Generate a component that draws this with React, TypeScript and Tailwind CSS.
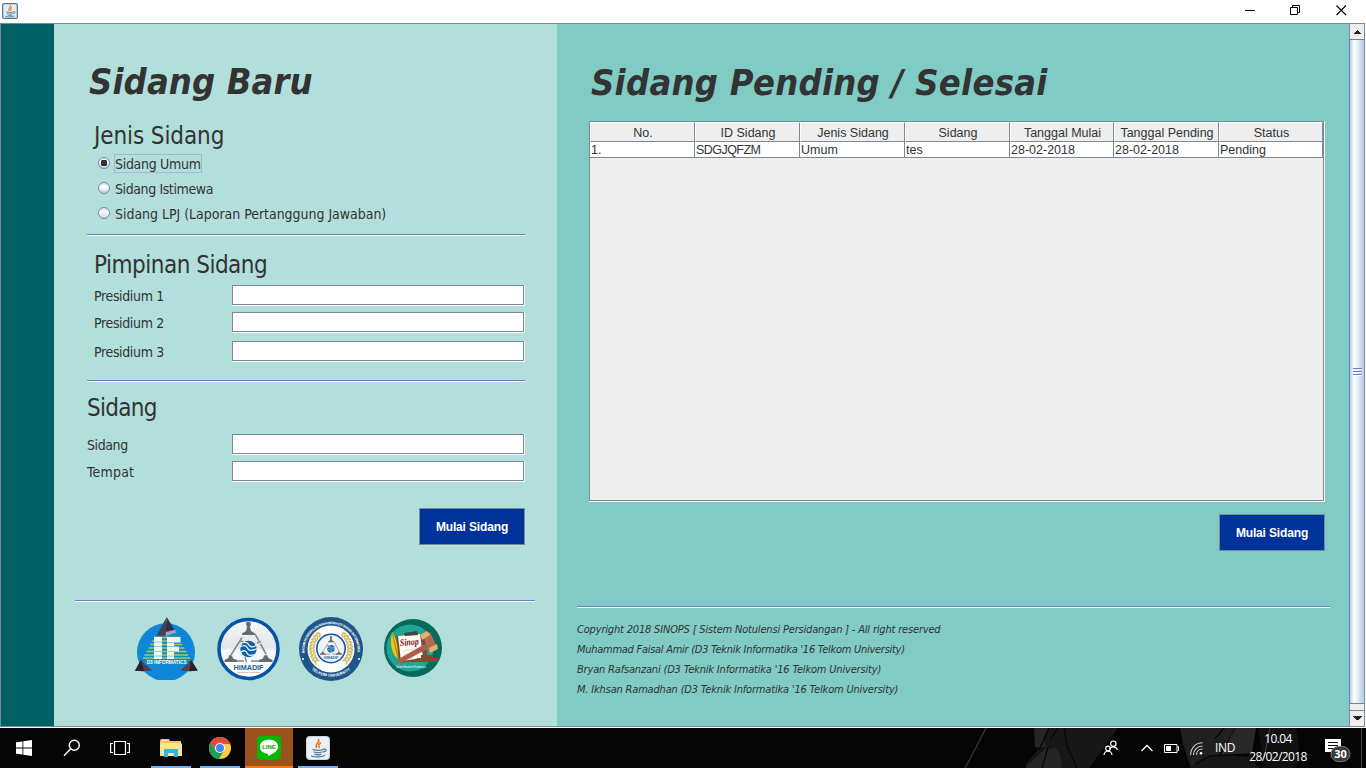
import type { ReactNode } from "react";

function Separator({ className = "" }: { className?: string }) {
  return <div className={`h-0.5 shrink-0 border-t border-[#6382bf] bg-white ${className}`} />;
}

function Radio({ label, tracking, checked = false }: { label: string; tracking: string; checked?: boolean }) {
  return (
    <div className="flex h-[25px] items-center pl-[11px]">
      <svg className="mb-0.5 block size-3 shrink-0" viewBox="0 0 12 12">
        <defs>
          <linearGradient id="radioFill" x1="0" y1="0" x2="0" y2="1">
            <stop offset="0" stopColor="#d3e0f0" />
            <stop offset="0.4" stopColor="#ffffff" />
            <stop offset="1" stopColor="#b8cfe5" />
          </linearGradient>
        </defs>
        <circle cx="6" cy="6" r="5.5" fill="url(#radioFill)" stroke="#7a8a99" />
        {checked && <path d="M4 3h4l1 1v4l-1 1H4L3 8V4z" fill="#333333" />}
      </svg>
      <span
        className={`ml-1 flex h-[19px] items-center whitespace-nowrap border pt-0.5 text-[14px] ${tracking} ${
          checked ? "border-[#a3b8cc]" : "border-transparent"
        }`}
      >
        {label}
      </span>
    </div>
  );
}

function Field({ label, tracking, className = "" }: { label: string; tracking: string; className?: string }) {
  return (
    <div className={`flex h-[21px] shrink-0 ${className}`}>
      <label className={`flex-1 text-[14px] leading-[22px] ${tracking}`}>{label}</label>
      <div className="h-[21px] w-[293px] border-r border-b border-white">
        <div className="h-5 w-[292px] border border-[#7a8a99] bg-white" />
      </div>
    </div>
  );
}

function StartButton({ className = "" }: { className?: string }) {
  return (
    <button
      className={`h-[37px] w-[106px] shrink-0 border border-[#7a8a99] bg-[#003399] font-['Liberation_Sans',sans-serif] text-[12px] font-bold tracking-[-0.15px] text-white ${className}`}
    >
      Mulai Sidang
    </button>
  );
}

function InformaticsLogo() {
  return (
    <svg className="block h-[63px] w-[64px]" viewBox="0 0 64 63">
      <circle cx="31" cy="35.300" r="29" fill="#0f87d6" />
      <path
        d="M19 20.500h25M17.500 24h28M15.500 27.500h32M13.500 31h36M11.500 34.500h40M9.500 38h43.500M8 41h47"
        stroke="#a3c95a"
        strokeWidth="1.400"
      />
      <path d="M19 20h8v22h-8zM32 20h13.500v5.500H39v4h5v5h-5V42h-7z" fill="#f1f7ea" />
      <path d="M19 25h8M19 29.500h8M19 34.500h8M19 39h8M32 25.500h7M32 29.500h7M32 34.500h7M32 39h7" stroke="#8ecbe0" strokeWidth="1" />
      <path d="M31.700 0 21.700 18.500l8.600.700z" fill="#4a3f55" />
      <path d="M31.700 0 30.300 19.200 41 15.300z" fill="#33304f" />
      <path d="m31 15 9.300-2.500.900 3.200-10.900 3.500z" fill="#a2a0c0" />
      <path d="M6 43 0 53.700l9 .600 8-.800z" fill="#53404a" />
      <path d="M6 43 0 53.700l9 .600z" fill="#2c2030" />
      <path d="m56 43-10.500 10.500 9 .800 8.200-.800z" fill="#53404a" />
      <path d="m56 43-1.500 11.300 8.200-.800z" fill="#2c2030" />
      <path d="M10.500 42h42l1 5.500h-44z" fill="#1488cf" />
      <text
        x="31.700"
        y="47"
        textAnchor="middle"
        textLength="40"
        lengthAdjust="spacingAndGlyphs"
        className="fill-white font-['Liberation_Sans',sans-serif] text-[5.500px] font-bold"
      >
        D3 INFORMATICS
      </text>
    </svg>
  );
}

function HimadifMark() {
  return (
    <g>
      <path d="M25 20.500 14 38M38 17l4 7M43.500 27 49 37M17 44h10M34 44h11" stroke="#85898d" strokeWidth="1.600" fill="none" />
      <path d="M22.500 24.500h4M40 26l4-1.500M28 40l1.500 5" stroke="#85898d" strokeWidth="1.400" fill="none" />
      <path d="M29.500 5h3.500l1 2-1 3 1 4 4 2.500v1.500H25v-1.500l4-2.500 1-4-1-3z" fill="#686b6e" />
      <path d="m12 38 3 .500 1 3 4 1.500v2H7.500v-2l4-2z" fill="#686b6e" />
      <path d="m50 38-3 .500-1 3-4 1.500v2h13.500v-2l-4-2z" fill="#686b6e" />
      <circle cx="31.500" cy="32" r="8.200" fill="#0d5fae" />
      <path
        d="M22.500 30c4-2.500 7-1.500 8 1s4 3.500 9.500.500M26 25.500c3-.500 5 .500 6 2.500s3.500 2.500 7 .500M24 35c3-2 5-1.500 6 1s3.500 3 7.500 1.500"
        stroke="#e8f1f8"
        strokeWidth="1.300"
        fill="none"
      />
    </g>
  );
}

function HimadifLogo() {
  return (
    <svg className="block h-[64px] w-[64px]" viewBox="0 0 64 64">
      <defs>
        <linearGradient id="himadifFill" x1="0" y1="0" x2="0" y2="1">
          <stop offset="0" stopColor="#f8f9fa" />
          <stop offset="0.480" stopColor="#e2e4e6" />
          <stop offset="0.520" stopColor="#f5f6f7" />
          <stop offset="1" stopColor="#ffffff" />
        </linearGradient>
      </defs>
      <circle cx="31.500" cy="32" r="29.500" fill="url(#himadifFill)" stroke="#0753a5" strokeWidth="3.500" />
      <HimadifMark />
      <text
        x="31.500"
        y="52.500"
        textAnchor="middle"
        textLength="30"
        lengthAdjust="spacingAndGlyphs"
        className="fill-[#1764a9] font-['Liberation_Sans',sans-serif] text-[8px] font-bold"
      >
        HIMADIF
      </text>
      <text x="31.500" y="56" textAnchor="middle" textLength="23" className="fill-[#c46b60] font-['Liberation_Sans',sans-serif] text-[2.500px]">
        UNIVERSITAS TELKOM
      </text>
    </svg>
  );
}

const LEAVES = [-50, -40, -30, -20, -10, 0, 10, 20, 30, 40];

function SenateLogo() {
  return (
    <svg className="block h-[64px] w-[66px]" viewBox="0 0 66 64">
      <defs>
        <path id="senateTop" d="M6.500 36a26.600 26.600 0 1 1 53 0" />
        <path id="senateBottom" d="M10 49a30 30 0 0 0 46 0" />
      </defs>
      <circle cx="33" cy="32" r="32" fill="#1f5688" />
      <circle cx="33" cy="32" r="23.500" fill="#ffffff" />
      {LEAVES.map((angle) => (
        <g key={angle} fill="#d4bc68">
          <g transform={`rotate(${-angle} 33 32)`}>
            <ellipse cx="12.500" cy="32" rx="1.100" ry="2.500" transform="rotate(35 12.500 32)" />
            <ellipse cx="15.500" cy="32" rx="1" ry="2.200" transform="rotate(-35 15.500 32)" />
          </g>
          <g transform={`rotate(${angle} 33 32)`}>
            <ellipse cx="53.500" cy="32" rx="1.100" ry="2.500" transform="rotate(-35 53.500 32)" />
            <ellipse cx="50.500" cy="32" rx="1" ry="2.200" transform="rotate(35 50.500 32)" />
          </g>
        </g>
      ))}
      <circle cx="33" cy="31.500" r="14.200" fill="#f1f3f5" stroke="#0d57a5" strokeWidth="1.600" />
      <g transform="translate(18.500 17) scale(0.460)">
        <HimadifMark />
      </g>
      <text
        x="33"
        y="42"
        textAnchor="middle"
        textLength="14"
        lengthAdjust="spacingAndGlyphs"
        className="fill-[#1764a9] font-['Liberation_Sans',sans-serif] text-[4px] font-bold"
      >
        HIMADIF
      </text>
      <text className="fill-white font-['Liberation_Sans',sans-serif] text-[3.400px] font-bold tracking-[-0.300px]">
        <textPath href="#senateTop">BADAN PERWAKILAN MAHASISWA D3 TEKNIK INFORMATIKA</textPath>
      </text>
      <text textAnchor="middle" className="fill-white font-['Liberation_Sans',sans-serif] text-[4px] font-bold">
        <textPath href="#senateBottom" startOffset="50%">
          TELKOM UNIVERSITY
        </textPath>
      </text>
      <circle cx="5" cy="42" r="1" fill="#fff" />
      <circle cx="61" cy="42" r="1" fill="#fff" />
    </svg>
  );
}

function SinopsLogo() {
  return (
    <svg className="block h-[60px] w-[60px]" viewBox="0 0 60 60">
      <circle cx="30" cy="30" r="29" fill="#07685c" />
      <circle cx="27" cy="30" r="23.500" fill="#1fa596" />
      <path d="m13 18 22-3 7 4 3 22-29 4z" fill="#7f4c35" />
      <path d="m15 18 22-2 3 24-22 3z" fill="#fffaf2" />
      <path d="m21 15 13-2 1 4-13 1z" fill="#3b4a43" />
      <path d="m20 33 13-2M21 37l10-1M22 41l8-1" stroke="#d4cfc8" strokeWidth="0.800" />
      <path d="M9 14c4 6 6 13 6 27l-3-3c-4-6-5-14-3-24z" fill="#f3c512" />
      <path d="m9.500 16 7.500 32" stroke="#b77f08" strokeWidth="1" />
      <path d="m42 26 4 4-29 15.500-2.500-4z" fill="#a8604a" />
      <path d="m39 17 8-3 7 15-7 5z" fill="#b76a50" />
      <path d="m37 17 7-4 3 4-8 5zM46 30l8-4 1 5-8 4z" fill="#e6b267" />
      <path d="M38 37h12v3H38zM35 40h20v4H26z" fill="#8e4434" />
      <text
        x="17"
        y="28"
        textLength="19"
        lengthAdjust="spacingAndGlyphs"
        transform="rotate(-4 17 28)"
        className="fill-[#7b2028] font-['Liberation_Serif',serif] text-[10px] font-bold italic"
      >
        Sinop
      </text>
      <text
        x="28"
        y="50"
        textAnchor="middle"
        textLength="30"
        lengthAdjust="spacingAndGlyphs"
        className="fill-white font-['Liberation_Sans',sans-serif] text-[3px]"
      >
        Sistem Notulensi Persidangan
      </text>
    </svg>
  );
}

function JavaGlyph() {
  return (
    <g fill="none" strokeLinecap="round">
      <path d="M12.500 3.500c2 3-4 4-2 8M14.500 7c-3 1.500-1 3 -1.500 4.500" stroke="#ea7a22" strokeWidth="1.600" />
      <path
        d="M7 13.500c3 1 7 1 10 0M8 16c3 .9 5 .9 8 0M9 18.300c2 .6 4 .6 6 0M18 13c3-.5 2.500 2.500-.5 3M5.500 20c3 1.300 10 1.300 13-.5"
        stroke="#4f7f9f"
        strokeWidth="1.300"
      />
    </g>
  );
}

const COLUMNS = ["No.", "ID Sidang", "Jenis Sidang", "Sidang", "Tanggal Mulai", "Tanggal Pending", "Status"];
const ROW = ["1.", "SDGJQFZM", "Umum", "tes", "28-02-2018", "28-02-2018", "Pending"];

function SessionTable() {
  return (
    <div className="h-[381px] w-[736px] shrink-0 border-r border-b border-white">
      <div className="h-[380px] w-[735px] border border-[#7a8a99] bg-[#eeeeee] font-['Liberation_Sans',sans-serif] text-[12.500px]">
        <div className="grid grid-cols-[105px_105px_105px_105px_104px_105px_104px]">
          {COLUMNS.map((name) => (
            <div
              key={name}
              className="h-5 whitespace-nowrap border-t border-r border-b border-l border-t-white border-r-[#7a8a99] border-b-[#7a8a99] border-l-white pl-px text-center leading-5"
            >
              {name}
            </div>
          ))}
          {ROW.map((value, i) => (
            <div
              key={i}
              className={`h-4 border-r border-b border-[#7a8a99] bg-white pl-px leading-[17px] ${i === 1 ? "tracking-[-0.550px]" : ""}`}
            >
              {value}
            </div>
          ))}
        </div>
      </div>
    </div>
  );
}

function WindowBar() {
  return (
    <header className="flex h-[23px] shrink-0 items-start bg-white pl-0.5">
      <svg className="mt-[3px] size-4" viewBox="0 0 24 24">
        <rect x="1" y="1" width="22" height="22" rx="2" fill="#e6edf2" stroke="#5a7c94" strokeWidth="2" />
        <JavaGlyph />
      </svg>
      <svg className="ml-auto h-5 w-[130px]" viewBox="0 0 130 20" fill="none" stroke="#000">
        <path d="M9 10.500h10M54.500 7.500h7v7h-7zM56.500 7.500v-2h7v7h-2" />
        <path d="m100.500 5.500 9.500 9.500m0-9.500-9.500 9.500" strokeWidth="1.100" />
      </svg>
    </header>
  );
}

function ScrollBar() {
  return (
    <div className="flex w-[15px] shrink-0 flex-col bg-[#eeeeee]">
      <div className="flex h-[15px] items-center justify-center border-l border-[#7a8a99]">
        <svg className="h-1 w-[7px]" viewBox="0 0 7 4" shapeRendering="crispEdges">
          <path d="M3 0h1v1h1v1h1v1h1v1H0V3h1V2h1V1h1z" fill="#222" />
        </svg>
      </div>
      <div className="flex h-[665px] flex-col items-center justify-center gap-px border-t border-b border-l border-[#6382bf] bg-[linear-gradient(90deg,#b8cfe5_0%,#dce8f3_15%,#ffffff_32%,#e9f0f8_50%,#c7d9ea_80%,#b8cfe5_100%)]">
        {[0, 1, 2].map((n) => (
          <div key={n} className="h-[2px] w-[9px] border-t border-[#6382bf] bg-white" />
        ))}
      </div>
      <div className="h-1.5 border-l border-[#7a8a99]" />
      <div className="flex h-4 items-center justify-center border-t border-l border-[#7a8a99]">
        <svg className="h-[5px] w-[9px]" viewBox="0 0 9 5" shapeRendering="crispEdges">
          <path d="M0 0h9v1H8v1H7v1H6v1H3V3H2V2H1V1H0z" fill="#222" />
        </svg>
      </div>
    </div>
  );
}

function TaskButton({ children, className = "" }: { children: ReactNode; className?: string }) {
  return <div className={`flex h-10 shrink-0 items-center justify-center ${className}`}>{children}</div>;
}

function Taskbar() {
  return (
    <footer className="relative flex h-10 shrink-0 overflow-hidden bg-[#050505] text-white">
      <svg className="absolute top-0 right-0 h-10 w-[416px]" viewBox="950 0 416 40">
        <path d="m986 0-16 31-5 9" stroke="#303030" strokeWidth="1.500" fill="none" />
        <path d="M1036 0h82l-13 18-16 22h-58l-6-3 13-15-3-3z" fill="#171717" />
        <path d="M1034 0h15l-5 13 3 6h-12zM1045 21l11-1 4 6 2 14h-37z" fill="#252525" />
        <path d="m1049 0-9 20-5 2m13-2-6 20M1064 0l3 17 6 14 4 9M1050 12l8-12" stroke="#060606" strokeWidth="1.300" fill="none" />
        <path d="M1180 0h56l-17 26 7 5-7 9h-28l-8-24z" fill="#202020" />
        <path d="M1236 0h20l-4 25-33 5z" fill="#292929" />
        <path d="m1188 40 15-9 20-4 28 2 7 11z" fill="#171717" />
        <path d="m1258 0 7 40h30l6-7-5-33z" fill="#111" />
        <path d="m1270 0-6 30" stroke="#444" fill="none" />
        <path d="m1224 0-9 11M1195 36l15-8 40-2" stroke="#070707" strokeWidth="1.500" fill="none" />
      </svg>
      <TaskButton className="w-12">
        <svg className="size-4" viewBox="0 0 16 16" fill="white">
          <path d="M0 2.300 6.500 1.400v6.200H0zM7.300 1.300 16 0v7.600H7.300zM0 8.400h6.500v6.200L0 13.700zM7.300 8.400H16V16l-8.700-1.300z" />
        </svg>
      </TaskButton>
      <TaskButton className="w-12">
        <svg className="size-[18px]" viewBox="0 0 18 18" fill="none" stroke="white" strokeWidth="1.400">
          <circle cx="11.300" cy="6.200" r="5" />
          <path d="m7.700 9.800-6.700 7" />
        </svg>
      </TaskButton>
      <TaskButton className="w-12">
        <svg className="h-4 w-5" viewBox="0 0 20 16" fill="none" stroke="white" strokeWidth="1.200">
          <path d="M4.500 1.500h11v13h-11zM3 3.500H.600v9H3M17 3.500h2.400v9H17" />
        </svg>
      </TaskButton>
      <TaskButton className="ml-[7px] w-10 border-b-2 border-[#76aef5]">
        <svg className="mt-0.5 h-[19px] w-[22px]" viewBox="0 0 22 19">
          <path d="M0 1.500 1 0h8l1 2h11v15H0z" fill="#f0c84f" />
          <path d="M1 4h20l1 1v12H0V5z" fill="#fce497" />
          <path d="M2 1h5v1H2z" fill="#fff5cf" />
          <path d="M4 10h14v8h-4v-4H8v4H4z" fill="#35b3e8" />
        </svg>
      </TaskButton>
      <TaskButton className="ml-[9px] w-10 border-b-2 border-[#76aef5]">
        <svg className="mt-0.5 size-[22px]" viewBox="0 0 22 22">
          <circle cx="11" cy="11" r="11" fill="#ffcd42" />
          <path d="M1.500 5.500a11 11 0 0 1 19 0L21 7H11l-4.500 6.500z" fill="#dd4b3e" />
          <path d="M1.500 5.500A11 11 0 0 0 10 22l4.700-8-5.700 1.600-2.600-2.100z" fill="#179f5b" />
          <circle cx="11" cy="11" r="5" fill="#fff" />
          <circle cx="11" cy="11" r="4" fill="#4487f3" />
        </svg>
      </TaskButton>
      <TaskButton className="ml-[5px] w-12 border-b-2 border-[#ff7a0a] bg-[#9b531d]">
        <svg className="mt-px size-6" viewBox="0 0 24 24">
          <rect width="24" height="24" rx="4" fill="#00b900" />
          <path
            d="M12 3.500c-5 0-9.200 3-9.200 7.200 0 3.800 3.300 6.500 7.700 7.100.900.200.600 1.300.500 2.300 3-1.500 10.200-4.600 10.200-9.400C21.200 6.500 17 3.500 12 3.500z"
            fill="white"
          />
          <text
            x="12"
            y="12.900"
            textAnchor="middle"
            textLength="13.500"
            lengthAdjust="spacingAndGlyphs"
            className="fill-[#00a900] font-['Liberation_Sans',sans-serif] text-[6px] font-bold"
          >
            LINE
          </text>
        </svg>
      </TaskButton>
      <TaskButton className="ml-[5px] w-10 border-b-2 border-[#76aef5]">
        <svg className="mt-px size-6" viewBox="0 0 24 24">
          <rect x="0.500" y="0.500" width="23" height="23" rx="3" fill="#e9eff3" stroke="#cad6df" />
          <JavaGlyph />
        </svg>
      </TaskButton>
      <div className="relative ml-auto flex h-10 items-center font-['Open_Sans',sans-serif] text-[12px]">
        <svg className="mb-px h-4 w-4" viewBox="0 0 16 16" fill="none" stroke="white" strokeWidth="1.200">
          <circle cx="10.300" cy="3.700" r="2.700" />
          <path d="M6.500 9c1-3 6.500-3 8 .8" />
          <circle cx="5" cy="8.500" r="2.300" />
          <path d="M1 15c.5-5 7.500-5 8 0" />
        </svg>
        <svg className="ml-[22px] h-2 w-3" viewBox="0 0 12 8" fill="none" stroke="white" strokeWidth="1.300">
          <path d="m.500 7 5.500-5.500L11.500 7" />
        </svg>
        <svg className="ml-[11px] h-[9px] w-[15px]" viewBox="0 0 15 9">
          <path d="M.5.500h12.500v8H.500zM13.500 2.500h1v4h-1" fill="none" stroke="white" />
          <path d="M2 2h5v5H2z" fill="white" />
        </svg>
        <svg className="ml-[11px] h-[13px] w-[13px]" viewBox="0 0 13 13" fill="none" stroke="#d0d0d0" strokeWidth="1.100">
          <path d="M.600 13C.600 6 5.500.800 12.500.800M3.500 13c0-5 4-9 9-9M6.500 13c0-3.500 2.500-6 6-6" />
          <circle cx="11" cy="11.300" r="1.300" fill="white" stroke="none" />
        </svg>
        <span className="ml-3 w-5 tracking-[-0.300px]">IND</span>
        <div className="ml-[13px] flex w-[60px] flex-col items-center whitespace-nowrap leading-[18px] tracking-[-0.600px]">
          <span>10.04</span>
          <span>28/02/2018</span>
        </div>
        <svg className="mt-0.5 ml-[17px] h-7 w-[27px]" viewBox="0 0 27 28">
          <path d="M0 4h16v13H9l-3 3v-3H0z" fill="white" />
          <path d="M3 7.500h10M3 10.500h10M3 13.500h7" stroke="#111" strokeWidth="1.200" />
          <rect x="6" y="11.500" width="19" height="15" rx="7.500" fill="#393939" stroke="#777" />
          <text x="15.500" y="23" textAnchor="middle" className="fill-white font-['Open_Sans',sans-serif] text-[11px] font-bold">
            30
          </text>
        </svg>
        <div className="ml-[9px] h-10 w-[5px] border-l border-[#444]" />
      </div>
    </footer>
  );
}

export default function App() {
  return (
    <div className="flex h-[768px] w-[1366px] flex-col overflow-hidden bg-white">
      <WindowBar />
      <div className="flex h-[704px] w-[1365px] shrink-0 border border-[#7a8a99] font-['DejaVu_Sans_Condensed','DejaVu_Sans',sans-serif] text-[#333333] [font-stretch:condensed]">
        <div className="w-[53px] shrink-0 bg-[#006064]" />
        <section className="flex w-[503px] shrink-0 flex-col bg-[#b2dfdb] pt-[34px]">
          <h1 className="ml-[35px] h-[47px] text-[36px] leading-[47px] font-bold tracking-[0.100px] italic">Sidang Baru</h1>
          <div className="ml-[33px] flex w-[438px] flex-col">
            <h2 className="mt-[17px] ml-[7px] h-[29px] text-[24px] leading-[29px] tracking-[-0.100px]">Jenis Sidang</h2>
            <div>
              <Radio label="Sidang Umum" tracking="tracking-[-0.300px]" checked />
              <Radio label="Sidang Istimewa" tracking="tracking-[-0.400px]" />
              <Radio label="Sidang LPJ (Laporan Pertanggung Jawaban)" tracking="tracking-[-0.030px]" />
            </div>
            <Separator className="mt-[8px]" />
            <h2 className="mt-[15px] ml-[7px] h-[29px] text-[24px] leading-[29px] tracking-[-0.500px]">Pimpinan Sidang</h2>
            <Field className="mt-[5px] pl-[7px]" label="Presidium 1" tracking="tracking-[-0.360px]" />
            <Field className="mt-1.5 pl-[7px]" label="Presidium 2" tracking="tracking-[-0.360px]" />
            <Field className="mt-2 pl-[7px]" label="Presidium 3" tracking="tracking-[-0.360px]" />
            <Separator className="mt-[18px]" />
            <h2 className="mt-3 h-[29px] text-[24px] leading-[29px] tracking-[-0.700px]">Sidang</h2>
            <Field className="mt-[11px]" label="Sidang" tracking="tracking-[-0.400px]" />
            <Field className="mt-1.5" label="Tempat" tracking="tracking-[0.200px]" />
            <StartButton className="mt-[26px] self-end" />
          </div>
          <Separator className="mt-[55px] ml-[21px] w-[460px]" />
          <div className="mt-[15px] ml-[81px] flex">
            <InformaticsLogo />
            <div className="ml-[18px]">
              <HimadifLogo />
            </div>
            <div className="ml-[17px]">
              <SenateLogo />
            </div>
            <div className="mt-px ml-[19px]">
              <SinopsLogo />
            </div>
          </div>
        </section>
        <section className="flex w-[792px] shrink-0 flex-col bg-[#80cbc4] pt-[35px]">
          <h1 className="ml-[34px] h-[47px] text-[36px] leading-[47px] font-bold tracking-[0.270px] italic">Sidang Pending / Selesai</h1>
          <div className="mt-[15px] ml-8 flex w-[736px] flex-col">
            <SessionTable />
            <StartButton className="mt-3 self-end" />
          </div>
          <Separator className="mt-[55px] ml-5 w-[753px]" />
          <div className="mt-3 ml-5 flex flex-col text-[11px] leading-5 tracking-[-0.180px] whitespace-nowrap italic">
            <p>Copyright 2018 SINOPS [ Sistem Notulensi Persidangan ] - All right reserved</p>
            <p className="tracking-[-0.270px]">Muhammad Faisal Amir (D3 Teknik Informatika '16 Telkom University)</p>
            <p>Bryan Rafsanzani (D3 Teknik Informatika '16 Telkom University)</p>
            <p>M. Ikhsan Ramadhan (D3 Teknik Informatika '16 Telkom University)</p>
          </div>
        </section>
        <ScrollBar />
      </div>
      <div className="h-px shrink-0 bg-white" />
      <Taskbar />
    </div>
  );
}
